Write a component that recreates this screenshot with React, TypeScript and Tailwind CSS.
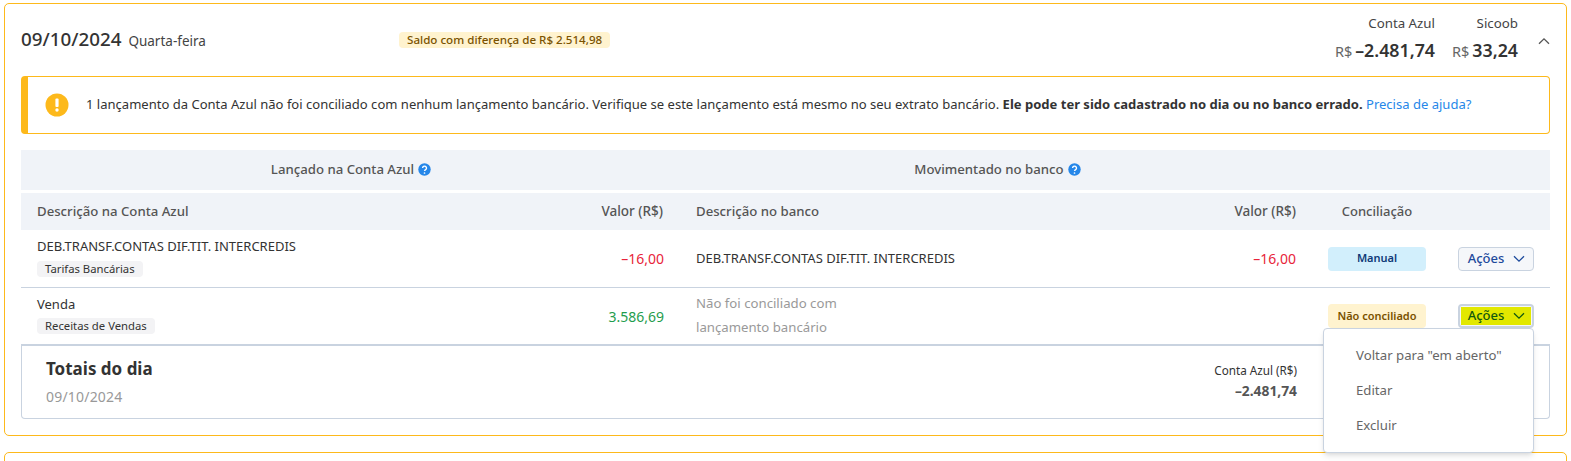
import React from "react";

const font = { fontFamily: '"Noto Sans", "Open Sans", sans-serif' };

function Help() {
  return (
    <svg width="13" height="13" viewBox="0 0 13 13" className="ml-[4px] shrink-0">
      <circle cx="6.5" cy="6.5" r="6.2" fill="#2687e9" />
      <path d="M4.6 5.1a1.95 1.95 0 1 1 3 1.6c-.7.45-1.05.75-1.05 1.4" fill="none" stroke="#fff" strokeWidth="1.4" />
      <circle cx="6.5" cy="10" r=".85" fill="#fff" />
    </svg>
  );
}

function Chevron({ className }: { className?: string }) {
  return (
    <svg width="12" height="8" viewBox="0 0 12 8" className={className}>
      <path d="M1 1.2l5 5 5-5" fill="none" stroke="currentColor" strokeWidth="1.3" />
    </svg>
  );
}

function Acoes({ active }: { active?: boolean }) {
  return (
    <div className={`w-[76px] h-[24px] rounded-[4px] bg-[#f5f7fa] flex items-center ${active ? "border-[2px] border-[#c9d3e0] p-px" : "border border-[#c9d3e0]"}`}>
      <div className={`flex-1 h-full flex items-center justify-center gap-[9px] pl-px text-[13px] font-medium ${active ? "bg-[#e2e800] text-[#12580f]" : "text-[#1d4a9c]"}`}>
        <span>Ações</span>
        <Chevron />
      </div>
    </div>
  );
}

const gridCols = "grid grid-cols-[643px_32px_600px_32px_98px_32px_92px]";

export default function App() {
  return (
    <div style={font} className="bg-white h-[461px] overflow-hidden pt-[3px] px-[4px] w-[1571px] relative text-[#333333]">
      <div className="w-[1563px] h-[433px] border border-[#fdb91b] rounded-[5px] px-[16px] flex flex-col">
        <div className="h-[72px] flex relative shrink-0">
          <div className="flex items-baseline pt-[22px] w-[378px]">
            <span className="text-[18.8px] font-medium text-[#333333] leading-[26px]">09/10/2024</span>
            <span className="text-[13.5px] ml-[7px] text-[#444444]">Quarta-feira</span>
          </div>
          <div className="mt-[28px] h-[16px] rounded-[4px] bg-[#fff3cf] px-[8px] text-[11.6px] leading-[16px] font-medium text-[#7a5200] whitespace-nowrap">
            Saldo com diferença de R$ 2.514,98
          </div>
          <div className="ml-auto flex pt-[9px] pr-[32px] relative">
            <div className="flex flex-col items-end">
              <span className="text-[13.3px] leading-[20px] text-[#444444]">Conta Azul</span>
              <span className="mt-[5px] leading-[24px] text-[17.8px] font-semibold text-[#333333]"><span className="text-[14.5px] font-normal text-[#666666] mr-[3px]">R$</span>–2.481,74</span>
            </div>
            <div className="flex flex-col items-end ml-[17px]">
              <span className="text-[13.3px] leading-[20px] text-[#444444]">Sicoob</span>
              <span className="mt-[5px] leading-[24px] text-[17.8px] font-semibold text-[#333333]"><span className="text-[14.5px] font-normal text-[#666666] mr-[3px]">R$</span>33,24</span>
            </div>
            <Chevron className="absolute right-[0px] top-[33px] rotate-180 text-[#555555]" />
          </div>
        </div>

        <div className="h-[58px] shrink-0 w-[1529px] border border-[#fdb91b] border-l-[7px] rounded-[4px] flex items-center pl-[17px] text-[13.04px] text-[#333333]">
          <svg width="24" height="24" viewBox="0 0 24 24" className="shrink-0 mr-[17px]">
            <circle cx="12" cy="12" r="11.5" fill="#fdb91b" />
            <rect x="10.4" y="5.5" width="3.2" height="8.5" rx="1" fill="#fff" />
            <circle cx="12" cy="17" r="1.7" fill="#fff" />
          </svg>
          <span className="whitespace-nowrap">
            1 lançamento da Conta Azul não foi conciliado com nenhum lançamento bancário. Verifique se este lançamento está mesmo no seu extrato bancário. <b className="font-bold">Ele pode ter sido cadastrado no dia ou no banco errado.</b> <span className="text-[#2687e9]">Precisa de ajuda?</span>
          </span>
        </div>

        <div className="w-[1529px] mt-[16px] relative">
          <div className="h-[40px] bg-[#f0f3f8] flex items-center text-[13.2px] font-medium text-[#555555]">
            <div className="w-[660px] flex items-center justify-center"><span>Lançado na Conta Azul</span><Help /></div>
            <div className="w-[633px] flex items-center justify-center"><span>Movimentado no banco</span><Help /></div>
          </div>
          <div className={`${gridCols} h-[37px] mt-[3px] bg-[#f0f3f8] items-center text-[13.2px] font-medium text-[#555555]`}>
            <div className="col-start-1 row-start-1 pl-[16px] whitespace-nowrap">Descrição na Conta Azul</div>
            <div className="col-start-1 row-start-1 justify-self-end text-[13.5px] pr-px">Valor (R$)</div>
            <div className="col-start-3 row-start-1 whitespace-nowrap">Descrição no banco</div>
            <div className="col-start-3 row-start-1 justify-self-end text-[13.5px]">Valor (R$)</div>
            <div className="col-start-5 row-start-1 text-center text-[13px]">Conciliação</div>
          </div>

          <div className={`${gridCols} h-[58px] items-center text-[13px] border-b border-[#c9d3e0]`}>
            <div className="col-start-1 row-start-1 pl-[16px] flex flex-col items-start">
              <span className="leading-[20px] mt-[-4px]">DEB.TRANSF.CONTAS DIF.TIT. INTERCREDIS</span>
              <span className="mt-[5px] h-[16px] rounded-[4px] bg-[#f3f3f5] px-[8px] text-[11.3px] leading-[16px] text-[#333333]">Tarifas Bancárias</span>
            </div>
            <div className="col-start-1 row-start-1 justify-self-end text-[14px] text-[#e8243a]">–16,00</div>
            <div className="col-start-3 row-start-1">DEB.TRANSF.CONTAS DIF.TIT. INTERCREDIS</div>
            <div className="col-start-3 row-start-1 justify-self-end text-[14px] text-[#e8243a]">–16,00</div>
            <div className="col-start-5 row-start-1 h-[24px] rounded-[4px] bg-[#d2effc] flex items-center justify-center text-[11px] font-semibold text-[#0f3a78]">Manual</div>
            <div className="col-start-7 row-start-1"><Acoes /></div>
          </div>

          <div className={`${gridCols} h-[58px] items-center text-[13px] border-b-2 border-[#c9d3e0]`}>
            <div className="col-start-1 row-start-1 pl-[16px] flex flex-col items-start">
              <span className="leading-[20px] mt-[-5px]">Venda</span>
              <span className="mt-[4px] h-[16px] rounded-[4px] bg-[#f3f3f5] px-[8px] text-[11.3px] leading-[16px] text-[#333333]">Receitas de Vendas</span>
            </div>
            <div className="col-start-1 row-start-1 justify-self-end text-[14px] text-[#1f9d4d]">3.586,69</div>
            <div className="col-start-3 row-start-1 leading-[24px] pb-[2px] text-[13.2px] text-[#999999]">Não foi conciliado com<br />lançamento bancário</div>
            <div className="col-start-5 row-start-1 h-[24px] rounded-[4px] bg-[#fff3cf] flex items-center justify-center text-[11px] font-semibold text-[#7a5200] whitespace-nowrap">Não conciliado</div>
            <div className="col-start-7 row-start-1"><Acoes active /></div>
          </div>

          <div className="h-[73px] border border-t-0 border-[#c9d3e0] rounded-b-[4px] flex">
            <div className="pl-[24px] pt-[11px]">
              <div className="text-[17px] leading-[24px] font-bold text-[#333333]">Totais do dia</div>
              <div className="text-[14px] tracking-[0.2px] leading-[20px] mt-[6px] text-[#999999]">09/10/2024</div>
            </div>
            <div className="ml-auto mr-[252px] pt-[14px] flex flex-col items-end">
              <div className="text-[11.7px] leading-[20px] text-[#333333]">Conta Azul (R$)</div>
              <div className="text-[13.8px] leading-[20px] mt-[1px] font-bold text-[#555555]">–2.481,74</div>
            </div>
          </div>

          <div className="absolute left-[1302px] top-[178px] w-[211px] h-[125px] rounded-[4px] bg-white border border-[#c9d3e0] shadow-md z-10 pt-[9px] text-[13.2px] text-[#666666]">
            <div className="h-[35px] flex items-center pl-[32px]">Voltar para "em aberto"</div>
            <div className="h-[35px] flex items-center pl-[32px]">Editar</div>
            <div className="h-[35px] flex items-center pl-[32px]">Excluir</div>
          </div>
        </div>
      </div>
      <div className="w-[1563px] h-[20px] mt-[16px] border border-[#fdb91b] rounded-[5px]" />
    </div>
  );
}
